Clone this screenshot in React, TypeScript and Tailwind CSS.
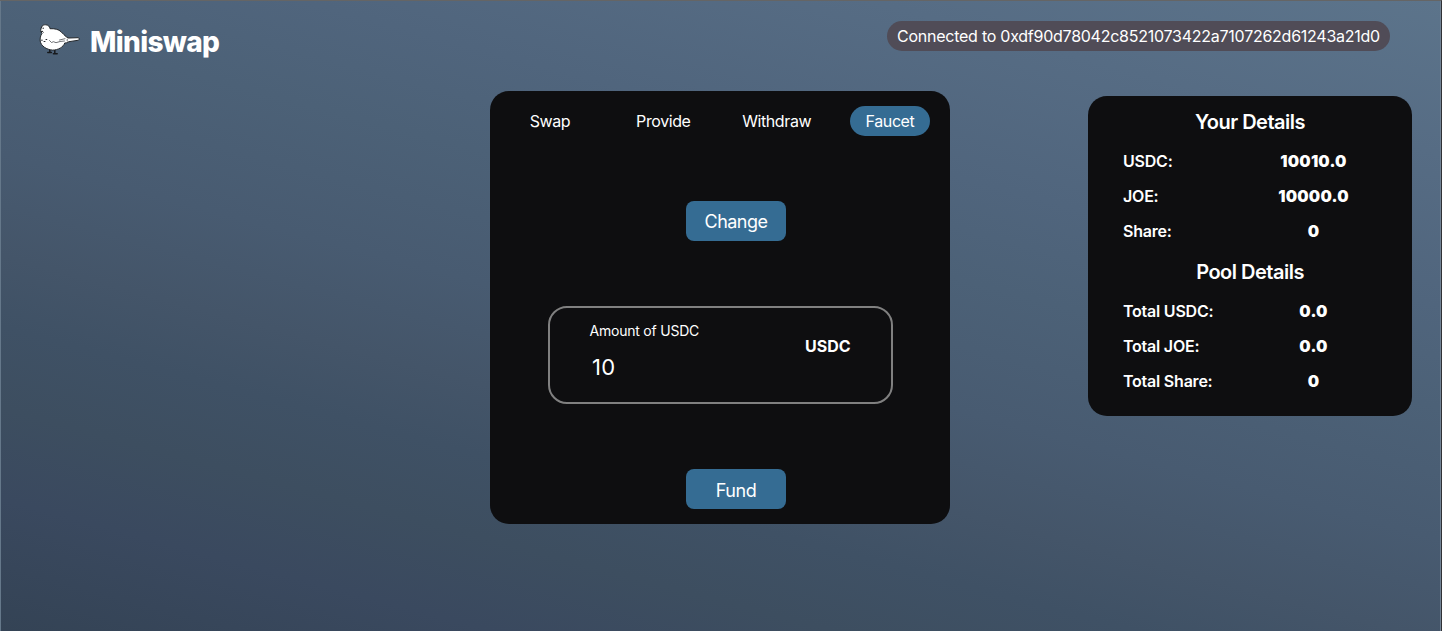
const tabs = [
  { name: "Swap", cls: "" },
  { name: "Provide", cls: "" },
  { name: "Withdraw", cls: "" },
  { name: "Faucet", cls: "bg-[#356c93]" },
];

function Row({ label, value }: { label: string; value: string }) {
  return (
    <div className="flex h-[35px] items-center pl-[35px] text-[16px] text-white">
      <span className="w-[140px] font-semibold tracking-[-0.22px]">{label}</span>
      <span className="w-[101px] text-center font-black tracking-[0.2px]">{value}</span>
    </div>
  );
}

function Bird() {
  return (
    <svg className="h-[34px] w-[42px]" viewBox="0 0 42 34" fill="none" strokeLinecap="round" strokeLinejoin="round">
      <path d="M10.8 26.500v3M8.800 29.600h3.600M15.800 26.500v4M14.400 30.700h3.800" stroke="#17191c" strokeWidth="1.5" />
      <path
        d="M1.800 8.500C1.500 6.500 2 5.300 2.700 4 3 2.300 5 1.700 6.500 1.800 9 1.700 10.800 3.500 11 5.700c5-.2 8.500.6 11 3 2.200 1.900 3.500 3.900 5.500 5.300l2.500 1 9.500-.3c.8.400.8 2.200.1 2.500l-9.800 1.500c-1.300 1.200-2.700 1.200-4 1.200-1.500 4.300-6.500 7.100-12.300 7.200C7.500 26.600 1.900 23 1.200 18c-.2-2.500.1-5.300 1.700-7.500z"
        fill="#fff"
        stroke="#24282c"
        strokeWidth="1"
      />
      <path d="M2.200 8.800l1-.8 1 1.300M3.900 5.200h.7M2.500 17.200h.8M5 18.500h1M7 16.500h.8" stroke="#25292d" strokeWidth="1" />
      <path d="M10.500 17.500l2 2 2-.8 2.500 1 4-1.200 4.500-.5M20.500 17l5.500-1.300M29 15.500c-1.300 1-1.200 2.200-.3 3" stroke="#33373b" strokeWidth=".7" />
    </svg>
  );
}

export default function App() {
  return (
    <div className="h-[631px] w-[1442px] overflow-hidden border-t border-r border-t-[#656565] border-r-[#303236] font-['Inter',sans-serif] text-white">
      <div className="h-full border-x border-l-[#65788a] border-r-[#718294] bg-[linear-gradient(15deg,#344355_0%,#3a495f_13%,#3d4e60_22%,#3f5165_30%,#445569_37%,#485b71_47%,#4c6177_60%,#50657d_70%,#566c84_85%,#5c748b_100%)]">
        <header className="flex h-[90px] items-start justify-between pl-[38px] pr-[50px]">
          <div className="flex items-start pt-[22px]">
            <Bird />
            <h1 className="-mt-px ml-[9px] text-[28px] leading-[40px] font-extrabold tracking-[-0.65px]">Miniswap</h1>
          </div>
          <div className="mt-[20px] flex h-[30px] w-[503px] items-center justify-center rounded-full bg-[#504c57] text-[16px] whitespace-nowrap">
            <span className="font-[430] tracking-[-0.25px]">Connected to 0xdf90d78042c8521073422a7107262d61243a21d0</span>
          </div>
        </header>

        <main className="flex items-start pl-[489px]">
          <section className="flex h-[433px] w-[460px] flex-col rounded-[19px] bg-[#0e0e10]">
            <nav className="flex justify-between px-[20px] pt-[15px]">
              {tabs.map((t) => (
                <button key={t.name} className={`flex h-[30px] w-[80px] items-center justify-center rounded-full text-[16px] font-[430] tracking-[-0.4px] ${t.cls}`}>
                  {t.name}
                </button>
              ))}
            </nav>
            <button className="mt-[65px] ml-[196px] h-[40px] w-[100px] rounded-[8px] bg-[#356c93] text-[18px] font-[430] tracking-[-0.55px]">Change</button>
            <div className="mt-[65px] ml-[57.5px] flex h-[98.4px] w-[345px] rounded-[19px] border-2 border-[#808080] pl-[39.5px]">
              <div className="w-[216px] pt-[13px]">
                <div className="pl-[0.5px] text-[14px] leading-[20px] font-[430] tracking-[-0.22px]">Amount of USDC</div>
                <div className="mt-[11px] pl-[3px] text-[22px] leading-[30px] font-[430] tracking-[0.4px]">10</div>
              </div>
              <div className="pt-[25.5px] text-[16px] leading-[24px] font-bold">USDC</div>
            </div>
            <button className="mt-[65px] ml-[196px] h-[40px] w-[100px] rounded-[8px] bg-[#356c93] pt-[2px] text-[18px] font-[430] tracking-[-0.5px]">Fund</button>
          </section>

          <aside className="mt-[5px] ml-[138px] h-[320px] w-[324px] rounded-[19px] bg-[#0e0e10] pt-[11px]">
            <h2 className="h-[36px] text-center text-[20px] leading-[30px] font-semibold tracking-[-0.5px]">Your Details</h2>
            <Row label="USDC:" value="10010.0" />
            <Row label="JOE:" value="10000.0" />
            <Row label="Share:" value="0" />
            <h2 className="mt-[9px] h-[36px] text-center text-[20px] leading-[30px] font-semibold tracking-[-0.5px]">Pool Details</h2>
            <Row label="Total USDC:" value="0.0" />
            <Row label="Total JOE:" value="0.0" />
            <Row label="Total Share:" value="0" />
          </aside>
        </main>
      </div>
    </div>
  );
}
